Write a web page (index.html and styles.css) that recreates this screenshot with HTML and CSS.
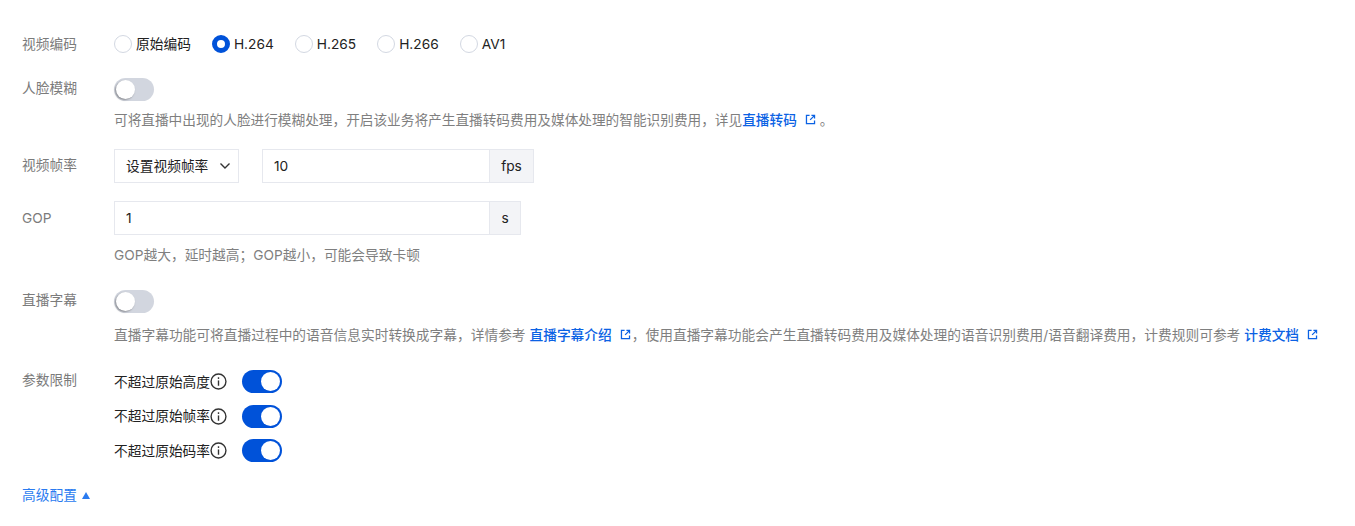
FILE: index.html
```html
<!DOCTYPE html>
<html lang="zh-CN">
<head>
    <meta charset="UTF-8">
    <meta name="viewport" content="width=device-width, initial-scale=1.0">
    <title>转码配置</title>
    <link rel="stylesheet" href="styles.css">
</head>
<body>
    <form class="config-form">
        <div class="row row-codec">
            <div class="label">视频编码</div>
            <div class="radio-group">
                <span class="radio"><i class="dot"></i>原始编码</span>
                <span class="radio"><i class="dot checked"></i>H.264</span>
                <span class="radio"><i class="dot"></i>H.265</span>
                <span class="radio"><i class="dot"></i>H.266</span>
                <span class="radio"><i class="dot"></i>AV1</span>
            </div>
        </div>

        <div class="row row-face">
            <div class="label">人脸模糊</div>
            <div class="field">
                <span class="switch"></span>
                <p class="help help-face">可将直播中出现的人脸进行模糊处理，开启该业务将产生直播转码费用及媒体处理的智能识别费用，详见<a class="link" href="#">直播转码<svg class="ext" viewBox="0 0 12 12"><path d="M5 1.6H1.6v8.8h8.8V7M7 1.6h3.4V5M10.2 1.8 5.6 6.4"/></svg></a>。</p>
            </div>
        </div>

        <div class="row row-fps">
            <div class="label">视频帧率</div>
            <div class="field inline">
                <div class="select">设置视频帧率<svg class="chevron" viewBox="0 0 12 8"><path d="M1.5 1.5 6 6l4.5-4.5"/></svg></div>
                <div class="input-group fps-group">
                    <div class="input">10</div>
                    <div class="addon">fps</div>
                </div>
            </div>
        </div>

        <div class="row row-gop">
            <div class="label">GOP</div>
            <div class="field">
                <div class="input-group gop-group">
                    <div class="input">1</div>
                    <div class="addon">s</div>
                </div>
                <p class="help help-gop">GOP越大，延时越高；GOP越小，可能会导致卡顿</p>
            </div>
        </div>

        <div class="row row-caption">
            <div class="label">直播字幕</div>
            <div class="field">
                <span class="switch"></span>
                <p class="help help-caption">直播字幕功能可将直播过程中的语音信息实时转换成字幕，详情参考 <a class="link" href="#">直播字幕介绍<svg class="ext" viewBox="0 0 12 12"><path d="M5 1.6H1.6v8.8h8.8V7M7 1.6h3.4V5M10.2 1.8 5.6 6.4"/></svg></a>，使用直播字幕功能会产生直播转码费用及媒体处理的语音识别费用/语音翻译费用，计费规则可参考 <a class="link" href="#">计费文档<svg class="ext" viewBox="0 0 12 12"><path d="M5 1.6H1.6v8.8h8.8V7M7 1.6h3.4V5M10.2 1.8 5.6 6.4"/></svg></a></p>
            </div>
        </div>

        <div class="row row-limit">
            <div class="label">参数限制</div>
            <div class="field limits">
                <div class="limit">
                    <span class="limit-name">不超过原始高度</span>
                    <svg class="info" viewBox="0 0 16 16"><circle cx="8" cy="8" r="7"/><path d="M8 7v5"/><path d="M8 4v1.6"/></svg>
                    <span class="switch on"></span>
                </div>
                <div class="limit">
                    <span class="limit-name">不超过原始帧率</span>
                    <svg class="info" viewBox="0 0 16 16"><circle cx="8" cy="8" r="7"/><path d="M8 7v5"/><path d="M8 4v1.6"/></svg>
                    <span class="switch on"></span>
                </div>
                <div class="limit">
                    <span class="limit-name">不超过原始码率</span>
                    <svg class="info" viewBox="0 0 16 16"><circle cx="8" cy="8" r="7"/><path d="M8 7v5"/><path d="M8 4v1.6"/></svg>
                    <span class="switch on"></span>
                </div>
            </div>
        </div>

        <a class="advanced" href="#">高级配置<i class="caret"></i></a>
    </form>
</body>
</html>
```

FILE: styles.css
```css
html, body {
    margin: 0;
    padding: 0;
    background: #fff;
}
body {
    font-family: Inter, "Noto Sans CJK SC", sans-serif;
    font-size: 13.72px;
    line-height: 20px;
    color: #1f1f1f;
    overflow: hidden;
}
.config-form {
    padding: 34px 0 0 22px;
}
.row {
    display: flex;
}
.label {
    width: 92px;
    flex-shrink: 0;
    color: #7b7b7b;
}
.field {
    flex: 1;
    min-width: 0;
}
.inline {
    display: flex;
    gap: 23px;
}
.help {
    margin: 0;
    color: #7f7f7f;
    white-space: nowrap;
}
.link {
    color: #0b62e4;
    font-weight: 500;
    text-decoration: none;
}
.ext {
    width: 11px;
    height: 11px;
    margin-left: 8px;
    margin-right: 1px;
    fill: none;
    stroke: #0b62e4;
    stroke-width: 1.4;
}

/* radios */
.radio-group {
    display: flex;
    gap: 21px;
    height: 20px;
}
.radio {
    display: flex;
    align-items: center;
    gap: 4px;
    color: #222;
}
.dot {
    width: 18px;
    height: 18px;
    box-sizing: border-box;
    border: 1.3px solid #d3d8e2;
    border-radius: 50%;
    background: #fff;
}
.dot.checked {
    border: 5.5px solid #0052d9;
}

/* switches */
.switch {
    display: block;
    position: relative;
    width: 40px;
    height: 23px;
    border-radius: 12px;
    background: #d2d6df;
}
.switch::after {
    content: "";
    position: absolute;
    top: 2px;
    left: 2px;
    width: 19px;
    height: 19px;
    border-radius: 50%;
    background: #fff;
    box-shadow: -1px 1px 2px rgba(0, 0, 0, 0.35);
}
.switch.on {
    background: #0052d9;
}
.switch.on::after {
    left: 19px;
    box-shadow: none;
}

/* inputs */
.select, .input, .addon {
    box-sizing: border-box;
    height: 34px;
    border: 1px solid #e6e8ee;
    line-height: 32px;
    color: #222;
}
.select {
    width: 125px;
    padding-left: 11px;
    display: flex;
    align-items: center;
    gap: 11px;
}
.chevron {
    width: 12px;
    height: 8px;
    fill: none;
    stroke: #333;
    stroke-width: 1.4;
}
.input-group {
    display: flex;
}
.input {
    padding-left: 11px;
}
.addon {
    margin-left: -1px;
    background: #f3f4f7;
    text-align: center;
}
.fps-group .input { width: 228px; }
.fps-group .addon { width: 45px; }
.gop-group .input { width: 376px; }
.gop-group .addon { width: 32px; }

/* row spacing */
.row-face { margin-top: 24px; }
.help-face {
    margin-top: 9px;
    font-size: 13.67px;
}
.help-face .ext { margin-right: 4px; }
.row-fps { margin-top: 19px; }
.row-fps .label { padding-top: 6px; }
.row-gop { margin-top: 18px; }
.row-gop .label { padding-top: 7px; }
.help-gop { margin-top: 10px; }
.row-caption { margin-top: 25px; }
.help-caption { margin-top: 12px; }
.row-limit { margin-top: 25px; }
.limits {
    display: flex;
    flex-direction: column;
    gap: 11.5px;
}
.limit {
    display: flex;
    align-items: center;
}
.limit-name {
    color: #222;
}
.info {
    width: 17px;
    height: 17px;
    margin-right: 15px;
    fill: none;
    stroke: #333;
    stroke-width: 1.3;
}
.advanced {
    display: inline-flex;
    align-items: center;
    gap: 5px;
    margin-top: 23px;
    color: #2a7bf0;
    text-decoration: none;
}
.caret {
    width: 0;
    height: 0;
    border-left: 4.5px solid transparent;
    border-right: 4.5px solid transparent;
    border-bottom: 7px solid #2a7bf0;
}
```
